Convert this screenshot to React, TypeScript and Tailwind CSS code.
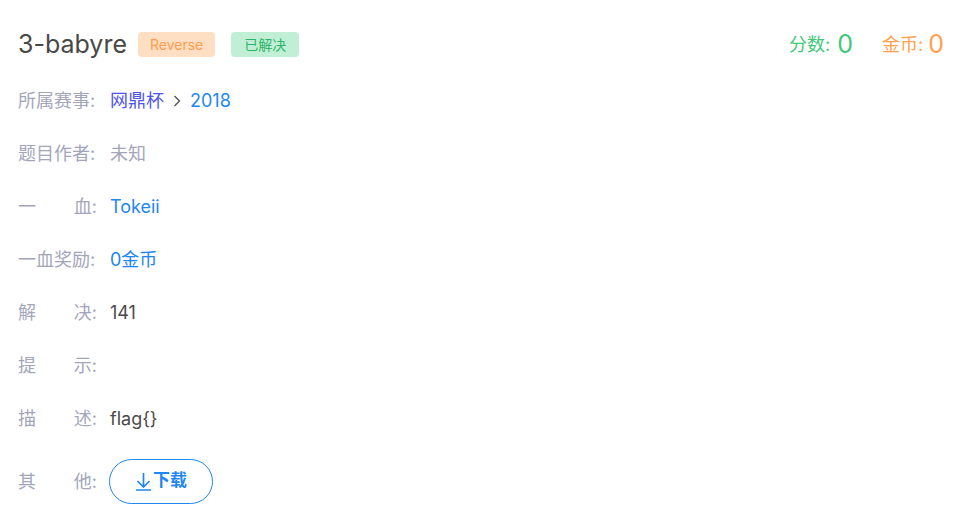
import React from "react";

const Label = ({ parts }: { parts: string[] }) => (
  <div className="w-[79px] shrink-0 text-[#a3a6bb] flex justify-between whitespace-nowrap">
    {parts.map((p, i) => (
      <span key={i}>{p}</span>
    ))}
  </div>
);

export default function App() {
  const font = { fontFamily: "Inter, 'Noto Sans CJK SC', sans-serif" };
  return (
    <div className="w-[965px] h-[525px] bg-white px-[18px] text-[18px]" style={font}>
      <div className="flex items-center justify-between h-[45px] pt-[22px] box-content">
        <div className="flex items-center">
          <span className="text-[25px] text-[#484848] leading-none">3-babyre</span>
          <span className="ml-[11px] h-[25px] px-[12px] rounded-[4px] bg-[#ffdfc4] text-[#ff9c4c] text-[14px] flex items-center">Reverse</span>
          <span className="ml-[16px] h-[25px] px-[13px] rounded-[4px] bg-[#c1efd5] text-[#2eb46a] text-[14px] flex items-center">已解决</span>
        </div>
        <div className="flex items-center mr-[3px]">
          <span className="text-[#3ec878] text-[18px]">分数:</span>
          <span className="text-[#3ec878] text-[25px] ml-[7px] leading-none">0</span>
          <span className="text-[#ff9f50] text-[18px] ml-[29px]">金币:</span>
          <span className="text-[#ff9f50] text-[25px] ml-[5px] leading-none">0</span>
        </div>
      </div>
      <div className="flex flex-col mt-[7px]">
        <div className="flex items-center h-[53px]">
          <Label parts={["所属赛事:"]} />
          <span className="ml-[13px] text-[#4f55ec]">网鼎杯</span>
          <span className="ml-[8px] flex items-center">
            <svg width="10" height="14" viewBox="0 0 10 14"><path d="M2.5 2 L7.5 7 L2.5 12" fill="none" stroke="#555" strokeWidth="1.4" /></svg>
          </span>
          <span className="ml-[8px] text-[#1f86f2]">2018</span>
        </div>
        <div className="flex items-center h-[53px]">
          <Label parts={["题目作者:"]} />
          <span className="ml-[13px] text-[#a3a6bb]">未知</span>
        </div>
        <div className="flex items-center h-[53px]">
          <Label parts={["一", "血:"]} />
          <span className="ml-[13px] text-[#1f86f2]">Tokeii</span>
        </div>
        <div className="flex items-center h-[53px]">
          <Label parts={["一血奖励:"]} />
          <span className="ml-[13px] text-[#1f86f2]">0金币</span>
        </div>
        <div className="flex items-center h-[53px]">
          <Label parts={["解", "决:"]} />
          <span className="ml-[13px] text-[#4a4a4a]">141</span>
        </div>
        <div className="flex items-center h-[53px]">
          <Label parts={["提", "示:"]} />
        </div>
        <div className="flex items-center h-[53px]">
          <Label parts={["描", "述:"]} />
          <span className="ml-[13px] text-[#4a4a4a]">flag{"{}"}</span>
        </div>
        <div className="flex items-center h-[72px]">
          <Label parts={["其", "他:"]} />
          <button className="ml-[12px] w-[104px] h-[45px] rounded-full border border-[#1f86f2] text-[#1f86f2] text-[17px] font-bold flex items-center justify-center">
            <svg width="17" height="19" viewBox="0 0 17 19" className="mr-[1px]">
              <path d="M8.5 1 V15 M2.5 9 L8.5 15 L14.5 9 M1 18 H16" fill="none" stroke="#1f86f2" strokeWidth="1.7" />
            </svg>
            下载
          </button>
        </div>
      </div>
    </div>
  );
}
